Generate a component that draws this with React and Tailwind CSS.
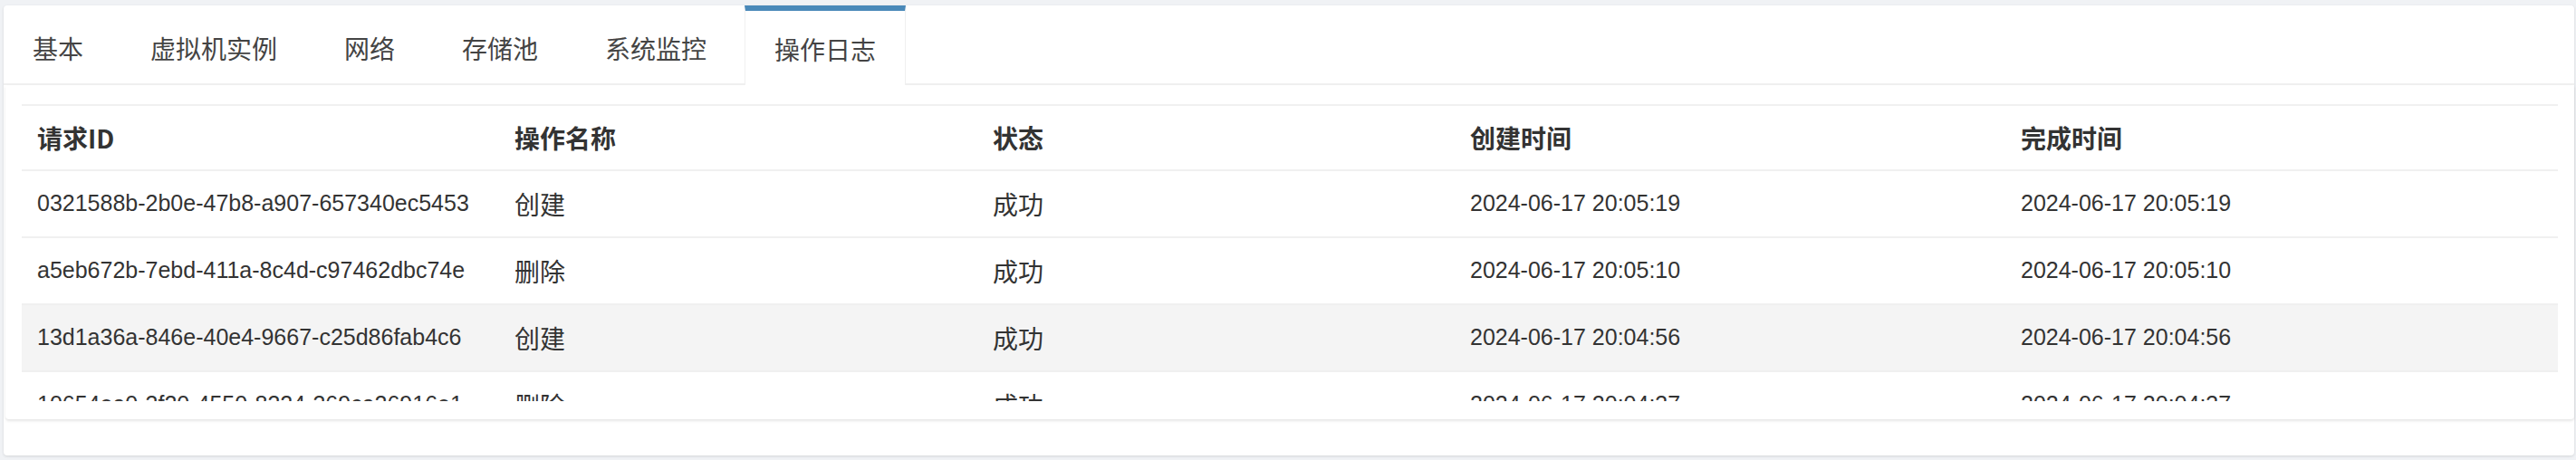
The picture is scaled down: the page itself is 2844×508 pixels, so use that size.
const tabs = ["基本", "虚拟机实例", "网络", "存储池", "系统监控", "操作日志"];

const columns = ["请求ID", "操作名称", "状态", "创建时间", "完成时间"];

const logs = [
  { id: "0321588b-2b0e-47b8-a907-657340ec5453", op: "创建", status: "成功", created: "2024-06-17 20:05:19", done: "2024-06-17 20:05:19" },
  { id: "a5eb672b-7ebd-411a-8c4d-c97462dbc74e", op: "删除", status: "成功", created: "2024-06-17 20:05:10", done: "2024-06-17 20:05:10" },
  { id: "13d1a36a-846e-40e4-9667-c25d86fab4c6", op: "创建", status: "成功", created: "2024-06-17 20:04:56", done: "2024-06-17 20:04:56", hover: true },
  { id: "10654ea0-3f20-4550-8324-369ca26916e1", op: "删除", status: "成功", created: "2024-06-17 20:04:37", done: "2024-06-17 20:04:37" },
];

const grid = "grid grid-cols-[527px_528px_527px_608px_610px]";
const latin = "pl-[17px] text-[25px] font-['Liberation_Sans',sans-serif]";
const cjk = "pl-[17px] text-[28px]";

export default function App() {
  return (
    <div
      className="min-h-[508px] bg-[#f0f2f5] pt-[6px] pl-[4px] pr-[2px] text-[#333]"
      style={{ fontFamily: '"Noto Sans CJK SC", "Noto Sans", sans-serif' }}
    >
      <div className="h-[497px] rounded-[4px] bg-white shadow-[0_1px_3px_rgba(0,0,0,0.12)]">
        {/* tabs */}
        <div className="flex h-[88px] gap-[10px] border-b-2 border-[#f0f0f0]">
          {tabs.map((t, i) => {
            const active = i === tabs.length - 1;
            return (
              <div
                key={t}
                className={
                  active
                    ? "relative -mb-[2px] flex h-[88px] items-center border-x border-t-[6px] border-x-[#f0f0f0] border-t-[#4a89b9] bg-white px-[32px] pt-[2px] text-[28px] text-[#444]"
                    : "flex h-[86px] items-center border-t-[6px] border-transparent px-[32px] pt-[2px] text-[28px] text-[#444]"
                }
              >
                {t}
              </div>
            );
          })}
        </div>

        {/* panel */}
        <div className="ml-[2px] rounded-b-[4px] bg-white px-[18px] pt-[21px] pb-[20px] shadow-[0_2px_3px_rgba(0,0,0,0.1)]">
          <div className="h-[328px] overflow-hidden">
            <div className={`${grid} h-[74px] items-center border-y-2 border-[#f0f0f0] text-[28px] font-bold text-[#333]`}>
              {columns.map((c) => (
                <div key={c} className="pl-[17px] whitespace-nowrap">{c}</div>
              ))}
            </div>
            {logs.map((r) => (
              <div
                key={r.id}
                className={`${grid} h-[74px] items-center border-b-2 border-[#f0f0f0] text-[#333] whitespace-nowrap ${r.hover ? "bg-[#f4f4f4]" : ""}`}
              >
                <div className={latin}>{r.id}</div>
                <div className={cjk}>{r.op}</div>
                <div className={cjk}>{r.status}</div>
                <div className={latin}>{r.created}</div>
                <div className={latin}>{r.done}</div>
              </div>
            ))}
          </div>
        </div>
      </div>
    </div>
  );
}
